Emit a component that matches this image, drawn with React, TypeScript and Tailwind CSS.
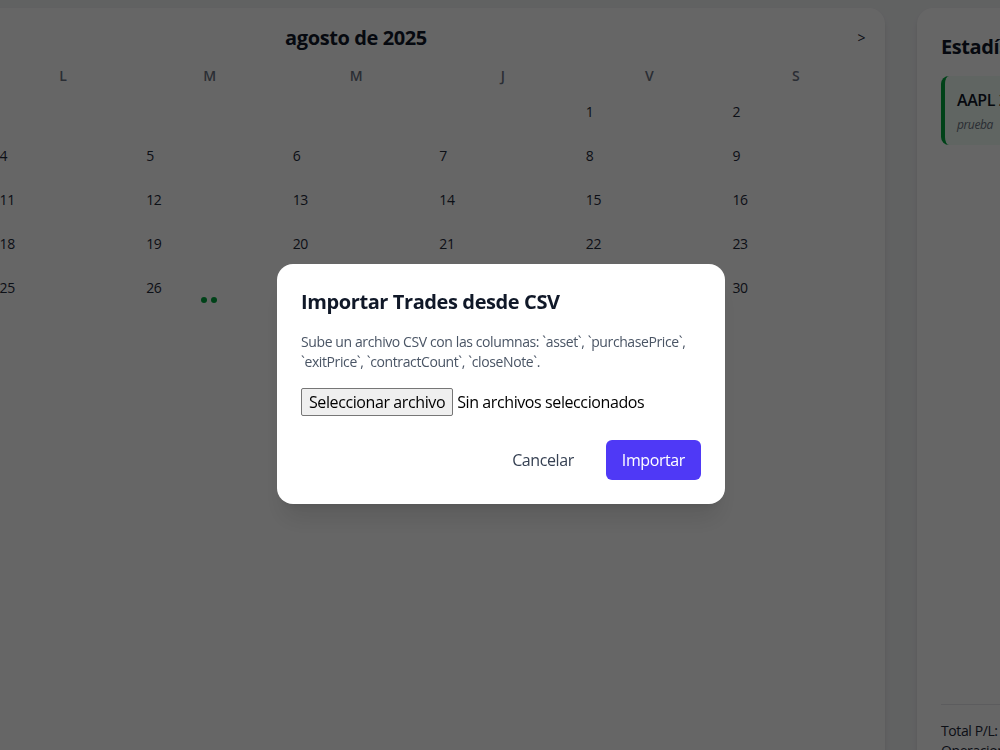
import React from 'react';

const WEEK_DAYS = ['D', 'L', 'M', 'M', 'J', 'V', 'S'];

// agosto 2025 starts on a Friday
const FIRST_WEEKDAY = 5;
const DAYS_IN_MONTH = 31;

const tradesByDay: Record<number, number> = { 26: 2 };

const CalendarCell: React.FC<{ day?: number }> = ({ day }) => {
  const trades = day ? tradesByDay[day] ?? 0 : 0;
  return (
    <div className="h-11 px-[10px] pt-2 flex flex-col">
      {day && <span className="text-sm leading-5 text-gray-800">{day}</span>}
      {trades > 0 && (
        <div className="flex justify-center gap-1 -mt-[1px]">
          {Array.from({ length: trades }).map((_, i) => (
            <span key={i} className="w-1.5 h-1.5 rounded-full bg-green-600" />
          ))}
        </div>
      )}
    </div>
  );
};

const Calendar: React.FC = () => {
  const cells: (number | undefined)[] = [];
  for (let i = 0; i < FIRST_WEEKDAY; i++) cells.push(undefined);
  for (let d = 1; d <= DAYS_IN_MONTH; d++) cells.push(d);

  return (
    <section className="w-[1058px] h-[777px] shrink-0 bg-white rounded-2xl shadow-md p-4">
      <div className="flex items-center justify-between mb-[14px]">
        <button className="text-sm text-gray-800 w-4 text-left">&lt;</button>
        <h2 className="text-xl leading-7 font-bold text-gray-900">agosto de 2025</h2>
        <button className="text-sm text-gray-800 w-4 text-right pr-[4px]">&gt;</button>
      </div>
      <div className="grid grid-cols-7 mb-2">
        {WEEK_DAYS.map((d, i) => (
          <div key={i} className="text-center text-sm leading-5 font-semibold text-gray-500">
            {d}
          </div>
        ))}
      </div>
      <div className="grid grid-cols-7">
        {cells.map((day, i) => (
          <CalendarCell key={i} day={day} />
        ))}
      </div>
    </section>
  );
};

const StatsPanel: React.FC = () => (
  <aside className="w-[400px] h-[777px] shrink-0 bg-white rounded-2xl shadow-md px-6 pt-[25px] pb-6 flex flex-col">
    <h2 className="text-xl leading-7 font-bold text-gray-900 whitespace-nowrap">Estadísticas del Día</h2>
    <div className="mt-[15px] rounded-lg border-l-4 border-green-600 bg-green-50 p-3">
      <div className="text-base leading-6 font-semibold text-gray-900 whitespace-nowrap">AAPL 2025-08-26 · +$120.00</div>
      <div className="mt-[5px] text-xs leading-4 italic text-gray-500">prueba</div>
    </div>
    <div className="mt-auto border-t border-gray-200 pt-4 text-sm leading-5 text-gray-800">
      <div>Total P/L: <span className="font-semibold text-green-600">$120.00</span></div>
      <div>Operaciones: 1</div>
    </div>
  </aside>
);

const ImportDialog: React.FC = () => (
  <div className="fixed inset-0 bg-black/60 flex items-center justify-center pt-[18px] pl-[2px]">
    <div className="w-[448px] bg-white rounded-2xl shadow-xl p-6">
      <h3 className="text-xl leading-7 font-bold text-gray-900 mb-4">Importar Trades desde CSV</h3>
      <p className="text-sm leading-5 text-gray-600 mb-4">
        Sube un archivo CSV con las columnas: `asset`, `purchasePrice`, `exitPrice`, `contractCount`, `closeNote`.
      </p>
      <div className="flex items-center">
        <button className="h-7 px-[7px] border border-[#767676] bg-[#efefef] rounded-[2px] text-base text-black">
          Seleccionar archivo
        </button>
        <span className="ml-1 text-base text-black">Sin archivos seleccionados</span>
      </div>
      <div className="flex justify-end gap-4 mt-6">
        <button className="px-4 py-2 rounded-md text-base leading-6 text-gray-700">Cancelar</button>
        <button className="px-4 py-2 rounded-md text-base leading-6 bg-indigo-600 text-white">Importar</button>
      </div>
    </div>
  </div>
);

export default function App() {
  return (
    <div className="min-h-screen h-[750px] overflow-hidden bg-gray-100 font-['Open_Sans',sans-serif] tracking-[-0.025em]">
      <div className="flex gap-8 pt-[8px] -ml-[173px]">
        <Calendar />
        <StatsPanel />
      </div>
      <ImportDialog />
    </div>
  );
}
